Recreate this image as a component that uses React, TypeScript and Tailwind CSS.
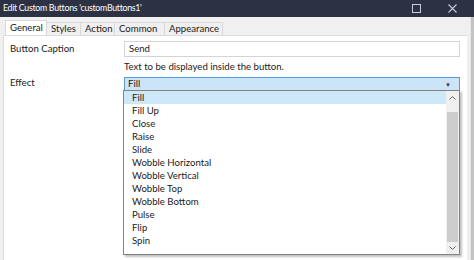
import React from 'react';

const EFFECTS = [
  'Fill',
  'Fill Up',
  'Close',
  'Raise',
  'Slide',
  'Wobble Horizontal',
  'Wobble Vertical',
  'Wobble Top',
  'Wobble Bottom',
  'Pulse',
  'Flip',
  'Spin',
];

const TABS = [
  { name: 'General', w: 'w-[42px]' },
  { name: 'Styles', w: 'w-[34px]' },
  { name: 'Action', w: 'w-[34px]' },
  { name: 'Common', w: 'w-[50px]' },
  { name: 'Appearance', w: 'w-[58px]' },
];

export default function App() {
  return (
    <div
      className="relative w-[474px] h-[260px] overflow-hidden bg-white flex flex-col text-[9.6px] text-[#1b1b1b]"
      style={{ fontFamily: 'Lato, "Noto Sans", sans-serif' }}
    >
      {/* Title bar */}
      <div className="h-[17px] shrink-0 bg-[#2c3244] flex items-center pl-[3px] text-white">
        <span className="flex-1 text-[8.8px] leading-none tracking-[-0.3px]">Edit Custom Buttons 'customButtons1'</span>
        <div className="w-[9px] h-[9px] border border-[#c9ccd4] mr-[27px] ml-[2px]" />
        <svg width="9" height="9" viewBox="0 0 9 9" className="mr-[17px]">
          <path d="M0.5 0.5 L8.5 8.5 M8.5 0.5 L0.5 8.5" stroke="#c9ccd4" strokeWidth="1.1" />
        </svg>
      </div>

      <div className="flex flex-1 min-h-0">
        <div className="flex-1 flex flex-col bg-[#f0f0f0]">
          {/* Tab strip */}
          <div className="h-[18px] shrink-0 flex items-end pl-[5px]">
            {TABS.map((t, i) => (
              <div
                key={t.name}
                className={
                  i === 0
                    ? `${t.w} h-[15px] bg-white border border-b-0 border-[#d9d9d9] pl-[4px] flex items-center leading-none`
                    : `${t.w} h-[13px] bg-[#f0f0f0] border border-l-0 border-b-0 border-[#d9d9d9] pl-[4px] flex items-center leading-none`
                }
              >
                {t.name}
              </div>
            ))}
          </div>

          {/* Content */}
          <div className="flex-1 ml-[3px] mr-[3px] bg-white border-l border-t border-[#dcdcdc] pt-[5px] pl-[6px]">
            <div className="flex items-center h-[16px]">
              <span className="w-[114px]">Button Caption</span>
              <div className="w-[336px] h-[16px] border border-[#d4d4d4] bg-white flex items-center pl-[4px]">Send</div>
            </div>
            <div className="pl-[114px] h-[18px] flex items-center mt-[1px]">Text to be displayed inside the button.</div>
            <div className="flex items-center h-[15px] mt-[1px]">
              <span className="w-[114px] -mt-[2px]">Effect</span>
              <div className="w-[336px] h-[15px] border border-[#5b9bd5] bg-[#cce4f7] flex items-center pl-[3px] pr-[8px]">
                <span className="flex-1">Fill</span>
                <span className="text-[6px] leading-none text-[#333]">▼</span>
              </div>
            </div>
          </div>
        </div>
        <div className="w-[4px] shrink-0 bg-[#c3c3c3] border-l border-[#e6e6e6]" />
      </div>

      {/* Dropdown list */}
      <div className="absolute left-[123px] top-[90px] w-[337px] h-[165px] bg-white border border-[#828282] shadow-[2px_2px_2px_rgba(0,0,0,0.25)] flex">
        <div className="flex-1 flex flex-col">
          {EFFECTS.map((e, i) => (
            <div
              key={e}
              className={`h-[13px] flex items-center pl-[8px] leading-none ${i === 0 ? 'bg-[#cde8f8]' : ''}`}
            >
              {e}
            </div>
          ))}
        </div>
        <div className="w-[13px] flex flex-col bg-[#f0f0f0]">
          <div className="h-[13px] flex items-center justify-center">
            <svg width="7" height="4" viewBox="0 0 7 4">
              <path d="M0.5 3.5 L3.5 0.5 L6.5 3.5" fill="none" stroke="#606060" strokeWidth="1" />
            </svg>
          </div>
          <div className="h-[8px]" />
          <div className="flex-1 bg-[#cdcdcd] mx-[1px]" />
          <div className="h-[12px] flex items-center justify-center">
            <svg width="7" height="4" viewBox="0 0 7 4">
              <path d="M0.5 0.5 L3.5 3.5 L6.5 0.5" fill="none" stroke="#606060" strokeWidth="1" />
            </svg>
          </div>
        </div>
      </div>
    </div>
  );
}
